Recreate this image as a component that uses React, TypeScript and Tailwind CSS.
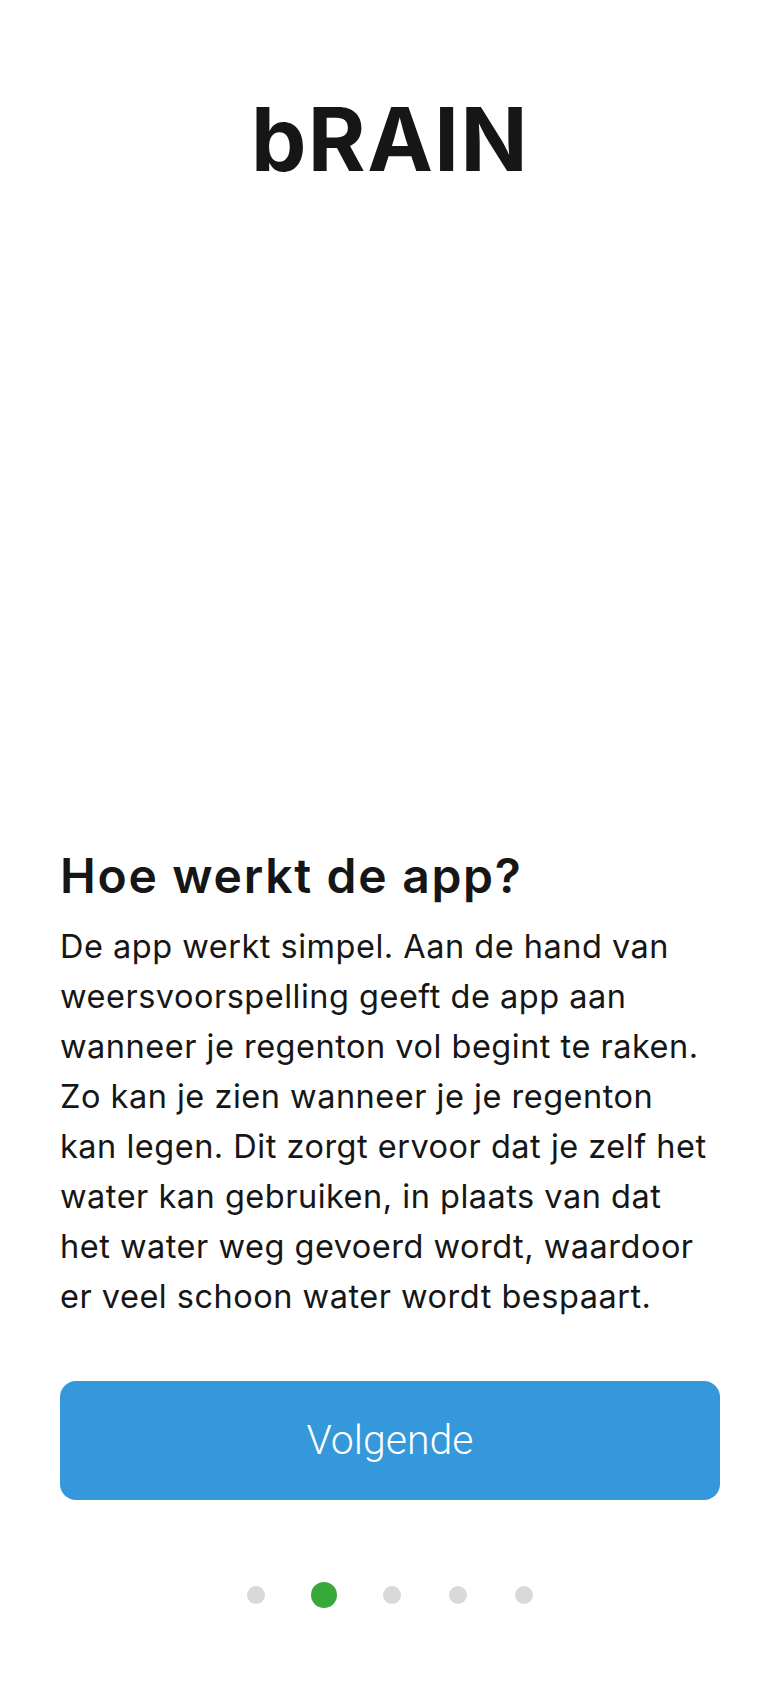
export default function App() {
  const dots = [false, true, false, false, false];
  return (
    <div className="w-[780px] h-[1688px] bg-white flex flex-col" style={{ fontFamily: "Inter, 'Noto Sans', sans-serif" }}>
      <div className="pt-[95px] flex justify-center">
        <h1 className="text-[88px] leading-none font-bold tracking-[1.5px] text-[#161616]">bRAIN</h1>
      </div>
      <div className="mt-auto px-[60px]">
        <h2 className="text-[48px] leading-[1.2] font-semibold tracking-[1.7px] text-[#161616]">Hoe werkt de app?</h2>
        <p className="mt-[17px] pr-[6px] text-[32.5px] leading-[50px] text-[#161616] tracking-[0.5px]">
          De app werkt simpel. Aan de hand van weersvoorspelling geeft de app aan wanneer je regenton vol begint te raken. Zo kan je zien wanneer je je regenton kan legen. Dit zorgt ervoor dat je zelf het water kan gebruiken, in plaats van dat het water weg gevoerd wordt, waardoor er veel schoon water wordt bespaart.
        </p>
        <button className="mt-[59px] w-full h-[119px] rounded-[16px] bg-[#3598db] text-white text-[41px] font-light" style={{ fontFamily: "Roboto, sans-serif" }}>
          Volgende
        </button>
      </div>
      <div className="mt-[82px] mb-[80px] h-[26px] flex items-center justify-center gap-[48px]">
        {dots.map((active, i) =>
          active ? (
            <span key={i} className="w-[26px] h-[26px] rounded-full bg-[#38a83a] -mx-[2px]" />
          ) : (
            <span key={i} className="w-[18px] h-[18px] rounded-full bg-[#d9d9d9]" />
          )
        )}
      </div>
    </div>
  );
}
